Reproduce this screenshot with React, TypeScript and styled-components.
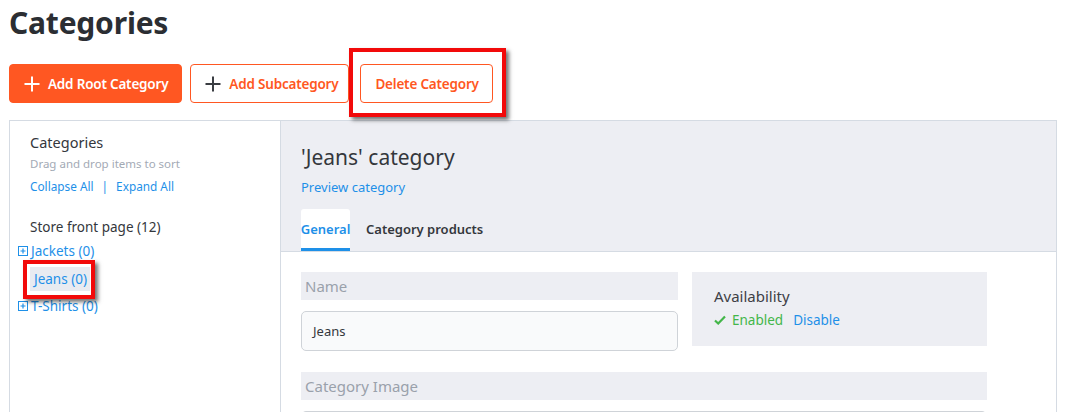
import React from "react";
import styled, { createGlobalStyle } from "styled-components";

const Global = createGlobalStyle`
  html, body { margin: 0; padding: 0; background: #fff; }
  body { font-family: "Noto Sans", "Open Sans", sans-serif; color: #2f3237; }
  * { box-sizing: border-box; }
`;

const Page = styled.div`
  padding: 0 0 0 9px;
  width: 1057px;
  height: 412px;
  overflow: hidden;
`;

const Title = styled.h1`
  margin: 0;
  padding-top: 4px;
  font-size: 30px;
  line-height: 38px;
  font-weight: 700;
  color: #2b2e33;
  letter-spacing: -0.2px;
`;

const Toolbar = styled.div`
  display: flex;
  align-items: center;
  margin-top: 22px;
  height: 39px;
`;

const Button = styled.button<{ $primary?: boolean; $gap?: number; $right?: number }>`
  display: inline-flex;
  align-items: center;
  gap: 8px;
  height: 39px;
  margin-right: ${(p) => p.$gap ?? 8}px;
  padding: 0 ${(p) => p.$right ?? 13}px 0 14px;
  border-radius: 4px;
  border: 1px solid #ff5722;
  background: ${(p) => (p.$primary ? "#ff5722" : "#fff")};
  color: ${(p) => (p.$primary ? "#fff" : "#ff5722")};
  font-family: "Noto Sans", sans-serif;
  font-size: 13.5px;
  font-weight: 600;
  letter-spacing: -0.2px;
  cursor: pointer;
`;

const Highlight = styled.div`
  position: relative;
  &::after {
    content: "";
    position: absolute;
    left: -11px;
    top: -16px;
    right: -13px;
    bottom: -14px;
    border: 4px solid #f20a0a;
    box-shadow: 3px 3px 4px rgba(0, 0, 0, 0.55);
    pointer-events: none;
  }
`;

const Panel = styled.div`
  margin-top: 17px;
  display: flex;
  width: 1048px;
  height: 300px;
  border-top: 1px solid #d5dbe3;
`;

const Sidebar = styled.aside`
  width: 271px;
  flex-shrink: 0;
  border-left: 1px solid #d5dbe3;
  padding: 12px 0 0 0;
`;

const SideHead = styled.div`
  padding-left: 20px;
  font-size: 14.5px;
  line-height: 18px;
  color: #34373c;
`;

const SideHint = styled.div`
  padding-left: 20px;
  margin-top: 6px;
  font-size: 11.5px;
  line-height: 14px;
  color: #a3aab5;
`;

const SideLinks = styled.div`
  padding-left: 20px;
  margin-top: 8px;
  font-size: 11.8px;
  line-height: 14px;
  color: #1e90e8;
  display: flex;
  gap: 8px;
`;

const Root = styled.div`
  padding-left: 20px;
  margin-top: 26px;
  font-size: 13.5px;
  line-height: 16px;
  color: #34373c;
`;

const Tree = styled.div`
  margin-top: 5px;
  display: flex;
  flex-direction: column;
`;

const TreeItem = styled.div<{ $selected?: boolean }>`
  display: flex;
  align-items: center;
  height: ${(p) => (p.$selected ? 33 : 22)}px;
  padding-left: ${(p) => (p.$selected ? 20 : 8)}px;
  font-size: 13.5px;
  color: #1e90e8;
  gap: 3px;
`;

const Selected = styled.span`
  position: relative;
  background: #e8ebf1;
  padding: 4px 3px 4px 4px;
  line-height: 16px;
  &::after {
    content: "";
    position: absolute;
    left: -7px;
    top: -7px;
    right: -5px;
    bottom: -8px;
    border: 4px solid #f20a0a;
    box-shadow: 3px 3px 4px rgba(0, 0, 0, 0.55);
  }
`;

const PlusBox = () => (
  <svg width="10" height="10" viewBox="0 0 10 10">
    <rect x="0.5" y="0.5" width="9" height="9" fill="none" stroke="#1e90e8" />
    <path d="M5 2.5v5M2.5 5h5" stroke="#1e90e8" strokeWidth="1.2" />
  </svg>
);

const Plus = ({ color }: { color: string }) => (
  <svg width="16" height="16" viewBox="0 0 16 16">
    <path d="M8 0.5v15M0.5 8h15" stroke={color} strokeWidth="2" />
  </svg>
);

const Main = styled.section`
  flex: 1;
  display: flex;
  flex-direction: column;
  border-left: 1px solid #d5dbe3;
  border-right: 1px solid #d5dbe3;
`;

const Header = styled.div`
  flex-shrink: 0;
  background: #edeef3;
  padding: 23px 0 0 20px;
  height: 131px;
  border-bottom: 1px solid #d5dbe3;
  display: flex;
  flex-direction: column;
`;

const HeaderTitle = styled.div`
  font-size: 21px;
  line-height: 26px;
  color: #34373c;
`;

const Preview = styled.a`
  margin-top: 9px;
  font-size: 13px;
  line-height: 16px;
  color: #1e90e8;
`;

const Tabs = styled.div`
  margin-top: 14px;
  display: flex;
  flex: 1;
  align-items: stretch;
`;

const Tab = styled.div<{ $active?: boolean }>`
  display: flex;
  align-items: center;
  justify-content: center;
  padding: 0 ${(p) => (p.$active ? 0 : 16)}px;
  font-size: 13px;
  font-weight: 600;
  color: ${(p) => (p.$active ? "#1e90e8" : "#34373c")};
  background: ${(p) => (p.$active ? "#fff" : "transparent")};
  border-bottom: 3px solid ${(p) => (p.$active ? "#1e90e8" : "transparent")};
  border-radius: 3px 3px 0 0;
  width: ${(p) => (p.$active ? "49px" : "auto")};
`;

const Body = styled.div`
  padding: 20px 0 0 20px;
  display: grid;
  grid-template-columns: 377px 295px;
  column-gap: 14px;
  row-gap: 21px;
  align-items: start;
`;

const Field = styled.div`
  display: flex;
  flex-direction: column;
  gap: 11px;
`;

const Label = styled.div`
  background: #edeef3;
  height: 28px;
  padding-left: 4px;
  display: flex;
  align-items: center;
  font-size: 15px;
  color: #9aa1ab;
`;

const Input = styled.div`
  height: 40px;
  border: 1px solid #cfd3d8;
  border-radius: 5px;
  background: #f9fafb;
  padding-left: 11px;
  display: flex;
  align-items: center;
  font-size: 13px;
  color: #34373c;
`;

const Availability = styled.div`
  background: #edeef3;
  height: 74px;
  padding: 14px 0 0 22px;
`;

const AvailTitle = styled.div`
  font-size: 15px;
  line-height: 20px;
  color: #3d4046;
`;

const AvailRow = styled.div`
  margin-top: 5px;
  display: flex;
  align-items: center;
  font-size: 13.5px;
  gap: 10px;
`;

const Enabled = styled.span`
  display: inline-flex;
  align-items: center;
  gap: 6px;
  color: #43b649;
`;

const Link = styled.span`
  color: #1e90e8;
`;

const ImageField = styled(Field)`
  grid-column: 1 / span 2;
`;

const Check = () => (
  <svg width="12" height="10" viewBox="0 0 12 10">
    <path d="M1 5.5l3.2 3L11 1.5" fill="none" stroke="#43b649" strokeWidth="2.2" />
  </svg>
);

export default function App() {
  return (
    <>
      <Global />
      <Page>
        <Title>Categories</Title>
        <Toolbar>
          <Button $primary>
            <Plus color="#fff" />
            Add Root Category
          </Button>
          <Button $gap={11} $right={10}>
            <Plus color="#3a3d42" />
            Add Subcategory
          </Button>
          <Highlight>
            <Button $gap={0}>Delete Category</Button>
          </Highlight>
        </Toolbar>
        <Panel>
          <Sidebar>
            <SideHead>Categories</SideHead>
            <SideHint>Drag and drop items to sort</SideHint>
            <SideLinks>
              <span>Collapse All</span>
              <span>|</span>
              <span>Expand All</span>
            </SideLinks>
            <Root>Store front page (12)</Root>
            <Tree>
              <TreeItem>
                <PlusBox />
                Jackets (0)
              </TreeItem>
              <TreeItem $selected>
                <Selected>Jeans (0)</Selected>
              </TreeItem>
              <TreeItem>
                <PlusBox />
                T-Shirts (0)
              </TreeItem>
            </Tree>
          </Sidebar>
          <Main>
            <Header>
              <HeaderTitle>'Jeans' category</HeaderTitle>
              <Preview>Preview category</Preview>
              <Tabs>
                <Tab $active>General</Tab>
                <Tab>Category products</Tab>
              </Tabs>
            </Header>
            <Body>
              <Field>
                <Label>Name</Label>
                <Input>Jeans</Input>
              </Field>
              <Availability>
                <AvailTitle>Availability</AvailTitle>
                <AvailRow>
                  <Enabled>
                    <Check />
                    Enabled
                  </Enabled>
                  <Link>Disable</Link>
                </AvailRow>
              </Availability>
              <ImageField>
                <Label>Category Image</Label>
                <Input />
              </ImageField>
            </Body>
          </Main>
        </Panel>
      </Page>
    </>
  );
}
